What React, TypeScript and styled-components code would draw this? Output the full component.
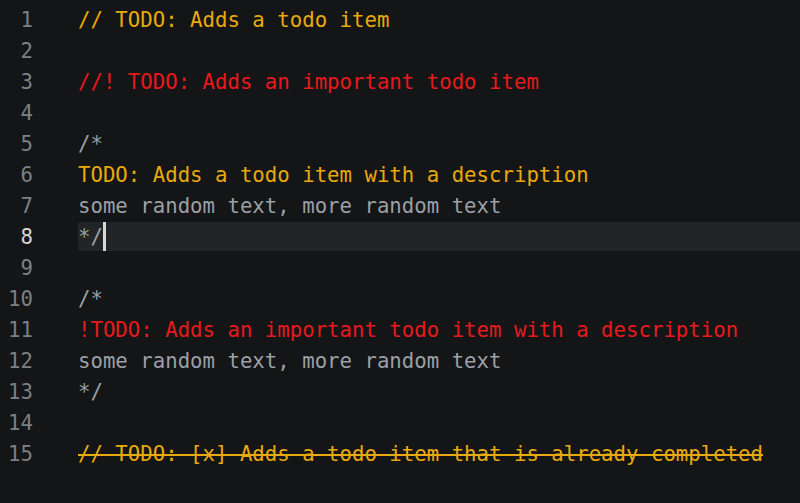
import React from "react";
import styled, { createGlobalStyle } from "styled-components";

const Global = createGlobalStyle`
  html, body { margin: 0; padding: 0; background: #141516; }
  body { width: 800px; height: 503px; overflow: hidden; }
`;

type Kind = "todo" | "important" | "plain" | "done" | "empty";

const lines: { text: string; kind: Kind; active?: boolean }[] = [
  { text: "// TODO: Adds a todo item", kind: "todo" },
  { text: "", kind: "empty" },
  { text: "//! TODO: Adds an important todo item", kind: "important" },
  { text: "", kind: "empty" },
  { text: "/*", kind: "plain" },
  { text: "TODO: Adds a todo item with a description", kind: "todo" },
  { text: "some random text, more random text", kind: "plain" },
  { text: "*/", kind: "plain", active: true },
  { text: "", kind: "empty" },
  { text: "/*", kind: "plain" },
  { text: "!TODO: Adds an important todo item with a description", kind: "important" },
  { text: "some random text, more random text", kind: "plain" },
  { text: "*/", kind: "plain" },
  { text: "", kind: "empty" },
  { text: "// TODO: [x] Adds a todo item that is already completed", kind: "done" },
];

const colors: Record<Kind, string> = {
  todo: "#e8a90e",
  important: "#e8191c",
  plain: "#9aa0a6",
  done: "#e8a90e",
  empty: "#9aa0a6",
};

const Editor = styled.div`
  display: flex;
  flex-direction: column;
  padding-top: 4px;
  font-family: "DejaVu Sans Mono", "Liberation Mono", monospace;
  font-size: 20.7px;
  background: #141516;
  height: 503px;
  box-sizing: border-box;
`;

const Row = styled.div`
  display: grid;
  grid-template-columns: 33px 45px 1fr;
  height: 31px;
  align-items: center;
`;

const LineNo = styled.span<{ $active?: boolean }>`
  text-align: right;
  color: ${(p) => (p.$active ? "#d4d4d4" : "#7c8085")};
  grid-column: 1;
`;

const Code = styled.div<{ $active?: boolean }>`
  grid-column: 3;
  height: 29px;
  display: flex;
  align-items: center;
  background: ${(p) => (p.$active ? "#232425" : "transparent")};
  border-radius: 3px 0 0 3px;
  white-space: pre;
`;

const Text = styled.span<{ $kind: Kind }>`
  color: ${(p) => colors[p.$kind]};
  text-decoration: ${(p) => (p.$kind === "done" ? "line-through" : "none")};
  text-decoration-thickness: 2px;
`;

const Caret = styled.span`
  display: inline-block;
  width: 3px;
  height: 29px;
  background: #d8d8d8;
`;

export default function App() {
  return (
    <>
      <Global />
      <Editor>
        {lines.map((l, i) => (
          <Row key={i}>
            <LineNo $active={l.active}>{i + 1}</LineNo>
            <Code $active={l.active}>
              <Text $kind={l.kind}>{l.text}</Text>
              {l.active && <Caret />}
            </Code>
          </Row>
        ))}
      </Editor>
    </>
  );
}
